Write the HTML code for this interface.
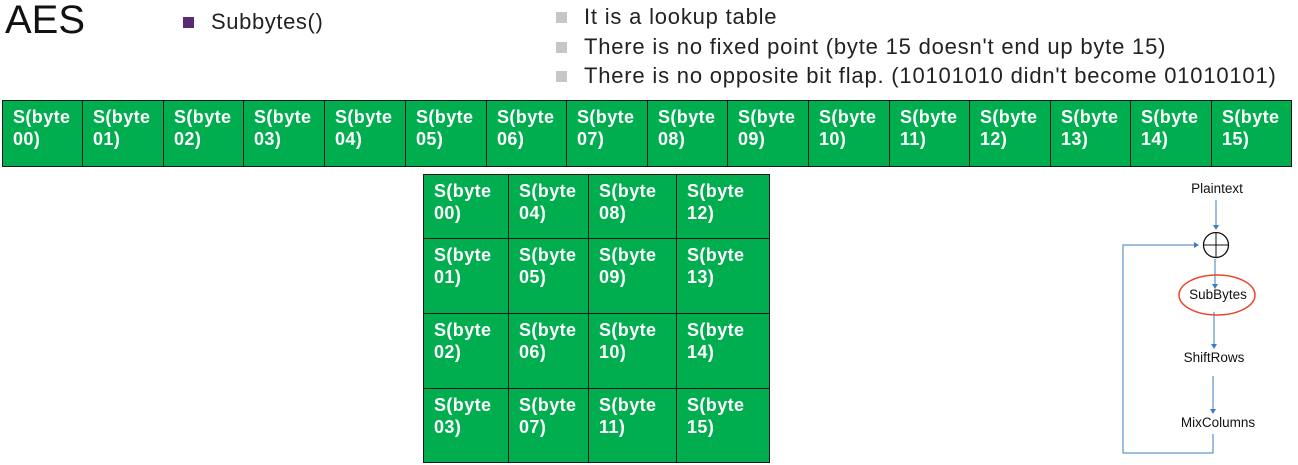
<!DOCTYPE html>
<html><head><meta charset="utf-8"><style>
body{margin:0;width:1298px;height:465px;background:#fff;position:relative;overflow:hidden;font-family:"Liberation Sans",Arial,sans-serif;}
.a{position:absolute;}
.c{position:absolute;background:#00ad4f;border:1px solid #1a1a1a;box-sizing:border-box;color:#fff;font-weight:bold;font-size:18px;letter-spacing:0.4px;line-height:22px;padding:5px 0 0 10px;}
.t{position:absolute;font-size:22px;letter-spacing:0.8px;color:#222;white-space:nowrap;line-height:24px;}
.sq{position:absolute;width:11px;height:11px;background:#c6c6c6;}
.d{position:absolute;font-size:13.5px;color:#111;white-space:nowrap;transform:translateX(-50%);}
</style></head><body>
<div class="a" style="left:5px;top:-2px;font-size:40px;color:#111;line-height:44px;">AES</div>
<div class="a" style="left:183px;top:17px;width:11px;height:11px;background:#5a2a77;"></div>
<div class="t" style="left:211px;top:10px;letter-spacing:0.6px;">Subbytes()</div>
<div class="sq" style="left:556px;top:12px;"></div><div class="t" style="left:584px;top:5px;">It is a lookup table</div>
<div class="sq" style="left:556px;top:42px;"></div><div class="t" style="left:584px;top:35px;">There is no fixed point (byte 15 doesn't end up byte 15)</div>
<div class="sq" style="left:556px;top:71px;"></div><div class="t" style="left:584px;top:64px;">There is no opposite bit flap. (10101010 didn't become 01010101)</div>
<div id="row"></div>
<div id="grid"></div>
<script>
var xs=[2,82,163,243,324,405,486,566,647,727,808,889,969,1050,1130,1211,1291],h='';
for(var i=0;i<16;i++){h+='<div class="c" style="left:'+xs[i]+'px;top:100px;width:'+(xs[i+1]-xs[i]+1)+'px;height:67px;">S(byte<br>'+(i<10?'0':'')+i+')</div>';}
document.getElementById('row').innerHTML=h;
var gx=[423,508,588,676,769],gy=[174,238,313,388,462];h='';
for(var r=0;r<4;r++)for(var c=0;c<4;c++){var n=c*4+r;h+='<div class="c" style="left:'+gx[c]+'px;top:'+gy[r]+'px;width:'+(gx[c+1]-gx[c]+1)+'px;height:'+(gy[r+1]-gy[r]+1)+'px;">S(byte<br>'+(n<10?'0':'')+n+')</div>';}
document.getElementById('grid').innerHTML=h;
</script>
<svg class="a" style="left:0;top:0" width="1298" height="465">
<g stroke="#3a7fc0" fill="none" stroke-width="1">
<line x1="1216" y1="200" x2="1216" y2="226"/>
<line x1="1215" y1="259" x2="1215" y2="285"/>
<line x1="1214" y1="312" x2="1214" y2="345"/>
<line x1="1213" y1="376" x2="1213" y2="410"/>
<polyline points="1213,434 1213,453 1123,453 1123,245 1195,245"/>
</g>
<g fill="#3a7fc0">
<polygon points="1213,225 1219,225 1216,230"/>
<polygon points="1212,284 1218,284 1215,289"/>
<polygon points="1211,344 1217,344 1214,349"/>
<polygon points="1210,409 1216,409 1213,414"/>
<polygon points="1194,242 1194,248 1199,245"/>
</g>
<circle cx="1216" cy="245" r="12.5" stroke="#111" stroke-width="1.3" fill="none"/>
<line x1="1216" y1="232.5" x2="1216" y2="257.5" stroke="#111"/>
<line x1="1203.5" y1="245" x2="1228.5" y2="245" stroke="#111"/>
<ellipse cx="1217" cy="295" rx="38" ry="20" stroke="#e8452a" stroke-width="1.5" fill="none"/>
</svg>
<div class="d" style="left:1217px;top:181px;">Plaintext</div>
<div class="d" style="left:1218px;top:287px;">SubBytes</div>
<div class="d" style="left:1214px;top:350px;">ShiftRows</div>
<div class="d" style="left:1218px;top:415px;">MixColumns</div>
</body></html>
